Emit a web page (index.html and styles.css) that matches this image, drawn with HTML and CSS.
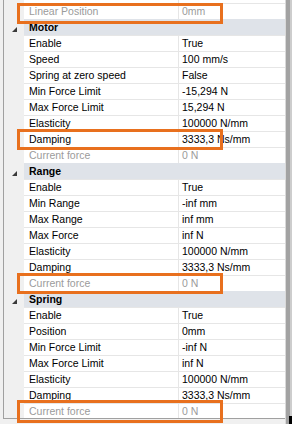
FILE: index.html
```
<!DOCTYPE html>
<html>
<head>
<meta charset="utf-8">
<link rel="stylesheet" href="styles.css">
</head>
<body>
<div class="frame">
  <div class="panel">
    <div class="rows">
      <div class="row"><div class="gut"></div><div class="name"></div><div class="val"></div></div>
      <div class="row ro mark mark-first"><div class="gut"></div><div class="name">Linear Position</div><div class="val">0mm</div></div>

      <div class="cat"><div class="gut"><svg class="tri" width="5" height="5" viewBox="0 0 5 5"><polygon points="5,0 5,5 0,5"/></svg></div><div class="cat-name">Motor</div></div>
      <div class="row"><div class="gut"></div><div class="name">Enable</div><div class="val">True</div></div>
      <div class="row"><div class="gut"></div><div class="name">Speed</div><div class="val">100 mm/s</div></div>
      <div class="row"><div class="gut"></div><div class="name">Spring at zero speed</div><div class="val">False</div></div>
      <div class="row"><div class="gut"></div><div class="name">Min Force Limit</div><div class="val">-15,294 N</div></div>
      <div class="row"><div class="gut"></div><div class="name">Max Force Limit</div><div class="val">15,294 N</div></div>
      <div class="row"><div class="gut"></div><div class="name">Elasticity</div><div class="val">100000 N/mm</div></div>
      <div class="row mark"><div class="gut"></div><div class="name">Damping</div><div class="val">3333,3 Ns/mm</div></div>
      <div class="row ro"><div class="gut"></div><div class="name">Current force</div><div class="val">0 N</div></div>

      <div class="cat"><div class="gut"><svg class="tri" width="5" height="5" viewBox="0 0 5 5"><polygon points="5,0 5,5 0,5"/></svg></div><div class="cat-name">Range</div></div>
      <div class="row"><div class="gut"></div><div class="name">Enable</div><div class="val">True</div></div>
      <div class="row"><div class="gut"></div><div class="name">Min Range</div><div class="val">-inf mm</div></div>
      <div class="row"><div class="gut"></div><div class="name">Max Range</div><div class="val">inf mm</div></div>
      <div class="row"><div class="gut"></div><div class="name">Max Force</div><div class="val">inf N</div></div>
      <div class="row"><div class="gut"></div><div class="name">Elasticity</div><div class="val">100000 N/mm</div></div>
      <div class="row"><div class="gut"></div><div class="name">Damping</div><div class="val">3333,3 Ns/mm</div></div>
      <div class="row ro mark"><div class="gut"></div><div class="name">Current force</div><div class="val">0 N</div></div>

      <div class="cat"><div class="gut"><svg class="tri" width="5" height="5" viewBox="0 0 5 5"><polygon points="5,0 5,5 0,5"/></svg></div><div class="cat-name">Spring</div></div>
      <div class="row"><div class="gut"></div><div class="name">Enable</div><div class="val">True</div></div>
      <div class="row"><div class="gut"></div><div class="name">Position</div><div class="val">0mm</div></div>
      <div class="row"><div class="gut"></div><div class="name">Min Force Limit</div><div class="val">-inf N</div></div>
      <div class="row"><div class="gut"></div><div class="name">Max Force Limit</div><div class="val">inf N</div></div>
      <div class="row"><div class="gut"></div><div class="name">Elasticity</div><div class="val">100000 N/mm</div></div>
      <div class="row"><div class="gut"></div><div class="name">Damping</div><div class="val">3333,3 Ns/mm</div></div>
      <div class="row ro mark mark-last"><div class="gut"></div><div class="name">Current force</div><div class="val">0 N</div></div>
    </div>
  </div>
  <div class="vbar"><div class="vb1"></div><div class="vb2"></div><div class="vb3"></div></div>
  <div class="corner"></div>
</div>
</body>
</html>
```
FILE: styles.css
```
html, body {
  margin: 0;
  padding: 0;
}
body {
  width: 292px;
  height: 424px;
  overflow: hidden;
  background: #f0f0f0;
  font-family: "Liberation Sans", Arial, sans-serif;
  font-size: 10.5px;
  color: #000;
}
.frame {
  position: relative;
  display: flex;
  height: 424px;
  padding-left: 3px;
}
.panel {
  width: 282px;
  height: 419px;
  box-sizing: border-box;
  border-left: 1px solid #a0a0a0;
  border-bottom: 1px solid #a0a0a0;
  background: #f0f0f0;
}
.rows {
  margin-top: -13px;
}
.row {
  position: relative;
  display: flex;
  height: 16px;
}
.row:last-child {
  height: 15px;
}
.gut {
  position: relative;
  width: 20px;
  flex: none;
}
.name {
  width: 155px;
  flex: none;
  box-sizing: border-box;
  border-top: 1px solid #e6e6e6;
  border-right: 1px solid #e6e6e6;
  background: #fff;
  padding-left: 5px;
  line-height: 15px;
  white-space: nowrap;
  overflow: hidden;
}
.val {
  flex: 1;
  border-top: 1px solid #e6e6e6;
  background: #fff;
  padding-left: 3px;
  line-height: 15px;
  white-space: nowrap;
  overflow: hidden;
}
.ro .name,
.ro .val {
  color: #9b9b9b;
}
.cat {
  display: flex;
  height: 16px;
  background: #dfe3e9;
}
.cat .gut {
  background: #f0f0f0;
}
.tri {
  position: absolute;
  left: 8px;
  top: 8px;
  fill: #3a3a3a;
}
.cat-name {
  padding-left: 5px;
  font-weight: bold;
  line-height: 17px;
}
.mark::after {
  content: "";
  position: absolute;
  left: 13px;
  top: -2px;
  width: 206px;
  height: 21px;
  box-sizing: border-box;
  border: 3px solid #e8701e;
  pointer-events: none;
  z-index: 2;
}
.mark-first::after {
  top: 0;
}
.mark-last::after {
  top: -3px;
  height: 23px;
}
.vbar {
  display: flex;
  height: 424px;
}
.vb1 {
  width: 1px;
  background: #d9d9d9;
}
.vb2 {
  width: 4px;
  background: #a2a2a2;
}
.vb3 {
  width: 2px;
  background: #cdcdcd;
}
.corner {
  position: absolute;
  right: 0;
  bottom: 0;
  width: 3px;
  height: 8px;
  background: #000;
}
```
